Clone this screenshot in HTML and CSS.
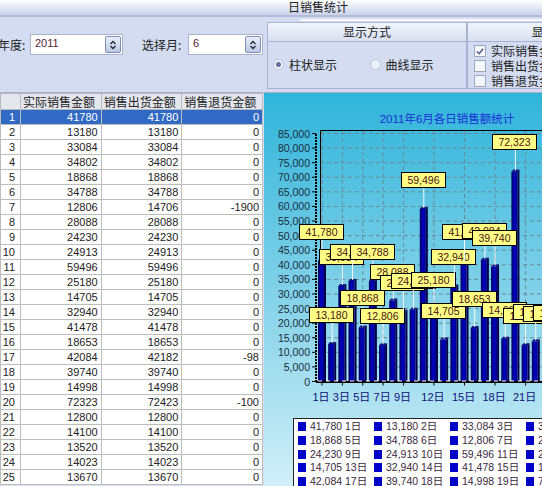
FILE: index.html
```html
<!DOCTYPE html>
<html lang="zh-CN">
<head>
    <meta charset="UTF-8">
    <title>日销售统计</title>
    <link rel="stylesheet" href="styles.css">
</head>
<body>

<div class="title-bar"><span class="title-text">日销售统计</span></div>

<div class="toolbar">
    <div class="field">
        <span class="field-label year-label">年度:</span>
        <div class="select year-select"><span>2011</span>
            <span class="spin"><svg width="8" height="10" viewBox="0 0 8 10"><path d="M1.5 4 4 1.5 6.5 4M1.5 6 4 8.5 6.5 6" fill="none" stroke="#223" stroke-width="1.3"/></svg></span>
        </div>
    </div>
    <div class="field month-field">
        <span class="field-label">选择月:</span>
        <div class="select month-select"><span>6</span>
            <span class="spin"><svg width="8" height="10" viewBox="0 0 8 10"><path d="M1.5 4 4 1.5 6.5 4M1.5 6 4 8.5 6.5 6" fill="none" stroke="#223" stroke-width="1.3"/></svg></span>
        </div>
    </div>
    <div class="group mode-group">
        <div class="group-head">显示方式</div>
        <div class="group-body radios">
            <label class="radio-item"><span class="radio checked"></span>柱状显示</label>
            <label class="radio-item"><span class="radio"></span>曲线显示</label>
        </div>
    </div>
    <div class="group show-group">
        <div class="group-head">显示内容</div>
        <div class="group-body checks">
            <label class="check-item"><span class="check"><svg width="11" height="11" viewBox="0 0 11 11"><path d="M2 5.5 4.5 8 9 2.5" fill="none" stroke="#55558a" stroke-width="1.6"/></svg></span>实际销售金额</label>
            <label class="check-item"><span class="check"></span>销售出货金额</label>
            <label class="check-item"><span class="check"></span>销售退货金额</label>
        </div>
    </div>
</div>

<div class="main">
    <table class="grid">
        <thead>
            <tr><th class="num-col"></th><th>实际销售金额</th><th>销售出货金额</th><th>销售退货金额</th></tr>
        </thead>
        <tbody id="gridBody"></tbody>
    </table>
    <div class="chart">
        <svg id="chartSvg" class="chart-svg" width="278" height="393" viewBox="264 93 278 393"></svg>
        <div class="legend" id="legend"></div>
    </div>
</div>

<script src="script.js"></script>
</body>
</html>
```

FILE: styles.css
```css
html, body {
    margin: 0;
    padding: 0;
}
body {
    width: 542px;
    height: 486px;
    overflow: hidden;
    background: #d6dff1;
    font-family: "Noto Sans CJK SC", "Liberation Sans", sans-serif;
    font-size: 12px;
    color: #222;
}
.title-bar {
    height: 15px;
    background: linear-gradient(to bottom, #ffffff, #c9d2ea);
    border-bottom: 2px solid #b4bcd9;
    overflow: hidden;
}
.title-text {
    display: block;
    margin-left: 288px;
    line-height: 13px;
}
.toolbar {
    display: flex;
    height: 75px;
    border-bottom: 1px solid #a9b1c9;
    background: #d4dcf1 linear-gradient(#f6f8fd, #f6f8fd) no-repeat 300px 2px / 242px 2px;
    overflow: hidden;
}
.field {
    display: flex;
    align-items: center;
    height: 21px;
    margin-top: 17px;
}
.field-label {
    white-space: nowrap;
}
.year-label {
    margin-left: -2px;
    width: 32px;
}
.month-field {
    margin-left: 19px;
}
.month-field .field-label {
    width: 46px;
}
.select {
    display: flex;
    justify-content: space-between;
    align-items: center;
    box-sizing: border-box;
    height: 21px;
    padding: 0 1px 3px 4px;
    background: #fff;
    border: 1px solid #a9b3cf;
    font-family: "Liberation Sans", sans-serif;
    font-size: 11px;
    color: #5a1a3a;
}
.year-select {
    width: 93px;
}
.month-select {
    width: 75px;
}
.spin {
    display: flex;
    align-items: center;
    justify-content: center;
    box-sizing: border-box;
    width: 16px;
    height: 17px;
    margin-top: 3px;
    background: linear-gradient(to bottom, #e8eefa, #bcc9e4);
    border: 1px solid #7f8fb5;
    border-radius: 2px;
}
.group {
    box-sizing: border-box;
    height: 67px;
    margin-top: 5px;
    border: 1px solid #aab2cf;
    background: #d4dcf1;
}
.mode-group {
    width: 201px;
    margin-left: 4px;
    border-right-width: 2px;
}
.show-group {
    width: 176px;
    flex-shrink: 0;
    border-left: none;
}
.group-head {
    height: 18px;
    line-height: 17px;
    text-align: center;
    border-bottom: 1px solid #aab2cf;
    background: linear-gradient(to bottom, #f2f5fc, #d7dff2);
}
.group-body {
    height: 46px;
}
.radios {
    display: flex;
    align-items: center;
    padding: 0 0 2px 5px;
    box-sizing: border-box;
}
.radio-item {
    display: flex;
    align-items: center;
    width: 98px;
    white-space: nowrap;
}
.radio {
    box-sizing: border-box;
    width: 11px;
    height: 11px;
    margin-right: 5px;
    border: 1px solid #bcc4dc;
    border-radius: 50%;
    background: #eef1f9;
}
.radio.checked {
    background: radial-gradient(circle, #6a6a9c 0, #6a6a9c 2px, #eef1f9 3px);
}
.checks {
    padding: 1px 0 0 6px;
}
.check-item {
    display: flex;
    align-items: center;
    height: 15px;
    white-space: nowrap;
}
.check {
    display: flex;
    box-sizing: border-box;
    width: 12px;
    height: 12px;
    margin-right: 5px;
    flex-shrink: 0;
    background: #f6f7fb;
    border: 1px solid #9ea6c0;
}
.main {
    display: flex;
    height: 394px;
}
.grid {
    align-self: flex-start;
    width: 263px;
    flex-shrink: 0;
    border-collapse: collapse;
    table-layout: fixed;
    background: #fff;
    font-family: "Liberation Sans", sans-serif;
    font-size: 11px;
    color: #222;
}
.grid th {
    height: 15px;
    padding: 0 0 0 2px;
    background: #e4e7ee;
    border: 1px solid #b5b8c0;
    font-family: "Noto Sans CJK SC", sans-serif;
    font-size: 12px;
    font-weight: normal;
    line-height: 14px;
    text-align: left;
    white-space: nowrap;
    overflow: hidden;
}
.grid .num-col {
    width: 17px;
}
.grid tr {
    height: 15px;
}
.grid td {
    box-sizing: border-box;
    height: 15px;
    padding: 0 3px 0 0;
    border: 1px solid #bdbdbd;
    text-align: right;
    line-height: 12px;
    overflow: hidden;
}
.grid td.row-num {
    padding-right: 5px;
}
.grid tr.selected td {
    background: #316ac5;
    color: #fff;
}
.chart {
    position: relative;
    width: 278px;
    height: 394px;
    margin-left: 1px;
    flex-shrink: 0;
    background: linear-gradient(to bottom, #2fb4da, #d2eff8);
    overflow: hidden;
}
.chart-svg {
    display: block;
    font-family: "Liberation Sans", "Noto Sans CJK SC", sans-serif;
    font-size: 10.5px;
}
.chart-title {
    fill: #1a2fd6;
    font-size: 11.5px;
    text-anchor: middle;
}
.y-label {
    fill: #1c2c3c;
    text-anchor: end;
}
.x-label {
    fill: #10107a;
    font-size: 11px;
    text-anchor: middle;
}
.grid-line {
    stroke: #6a8a94;
    stroke-width: 1;
    stroke-dasharray: 4 3;
}
.frame {
    stroke: #000;
    stroke-width: 1;
}
.y-axis {
    stroke: #000;
    stroke-width: 2;
    stroke-dasharray: 2 1;
}
.x-axis {
    stroke: #000;
    stroke-width: 2;
}
.x-axis-dash {
    stroke: #fff;
    stroke-width: 1;
    stroke-dasharray: 4 4;
}
.bar-front {
    fill: url(#barFill);
}
.bar-side {
    fill: #00004a;
}
.bar-top {
    fill: #0a0a78;
}
.leader {
    stroke: #f4f8fa;
    stroke-width: 1;
}
.tag-box {
    fill: #ffff85;
    stroke: #000;
    stroke-width: 1;
}
.tag-text {
    fill: #4a1410;
    text-anchor: middle;
    font-size: 10.5px;
}
.legend {
    position: absolute;
    left: 29px;
    top: 325px;
    display: grid;
    grid-template-columns: repeat(4, 76px);
    grid-auto-rows: 13.7px;
    width: 320px;
    height: 90px;
    padding: 1px 0 0 4px;
    background: #fff;
    border: 1px solid #222;
    font-family: "Liberation Sans", "Noto Sans CJK SC", sans-serif;
    font-size: 10.5px;
    color: #3a2a40;
}
.legend-item {
    display: flex;
    align-items: center;
    white-space: nowrap;
    line-height: 13px;
}
.legend-mark {
    width: 8px;
    height: 9px;
    margin-right: 4px;
    flex-shrink: 0;
    background: #0000c8;
}
```

FILE: script.js
```js
const rows = [
    [41780, 41780, 0], [13180, 13180, 0], [33084, 33084, 0], [34802, 34802, 0], [18868, 18868, 0],
    [34788, 34788, 0], [12806, 14706, -1900], [28088, 28088, 0], [24230, 24230, 0], [24913, 24913, 0],
    [59496, 59496, 0], [25180, 25180, 0], [14705, 14705, 0], [32940, 32940, 0], [41478, 41478, 0],
    [18653, 18653, 0], [42084, 42182, -98], [39740, 39740, 0], [14998, 14998, 0], [72323, 72423, -100],
    [12800, 12800, 0], [14100, 14100, 0], [13520, 13520, 0], [14023, 14023, 0], [13670, 13670, 0]
];

// Table
let tableHtml = '';
rows.forEach((r, i) => {
    tableHtml += `<tr class="${i === 0 ? 'selected' : ''}"><td class="row-num">${i + 1}</td><td>${r[0]}</td><td>${r[1]}</td><td>${r[2]}</td></tr>`;
});
document.getElementById('gridBody').innerHTML = tableHtml;

// Chart geometry, in page pixels
const zeroY = 381.5;
const perUnit = 248 / 85000;
const barX = day => 322 + (day - 1) * 10.18;
const money = n => n.toLocaleString('en-US');

let svg = `<defs><linearGradient id="barFill" x1="0" x2="1" y1="0" y2="0">
    <stop offset="0" stop-color="#000058"/><stop offset="0.5" stop-color="#0000c4"/><stop offset="1" stop-color="#00008c"/>
</linearGradient></defs>`;

svg += '<text class="chart-title" x="447" y="123">2011年6月各日销售额统计</text>';

// Horizontal grid and value labels
for (let v = 0; v <= 85000; v += 5000) {
    const y = zeroY - v * perUnit;
    if (v > 0) svg += `<line class="grid-line" x1="320" x2="542" y1="${y}" y2="${y}"/>`;
    svg += `<line class="frame" x1="312" x2="316" y1="${y}" y2="${y}"/>`;
    svg += `<text class="y-label" x="310" y="${y + 4}">${money(v)}</text>`;
}

// Vertical grid and day labels
[1, 3, 5, 7, 9, 12, 15, 18, 21].forEach(day => {
    const x = barX(day);
    svg += `<line class="grid-line" x1="${x}" x2="${x}" y1="131" y2="${zeroY}"/>`;
    svg += `<line class="frame" x1="${x}" x2="${x}" y1="${zeroY}" y2="${zeroY + 4}"/>`;
    svg += `<text class="x-label" x="${x - 1}" y="401">${day}日</text>`;
});

svg += '<line class="frame" x1="320" x2="542" y1="130.5" y2="130.5"/>';
svg += '<line class="frame" x1="320.5" x2="320.5" y1="130" y2="382"/>';
svg += '<line class="y-axis" x1="316" x2="316" y1="134" y2="383"/>';

// Bars
rows.forEach((r, i) => {
    const c = barX(i + 1);
    const top = zeroY - r[0] * perUnit;
    svg += `<rect class="bar-front" x="${c - 4}" y="${top + 1}" width="6" height="${zeroY - top - 1}"/>`;
    svg += `<polygon class="bar-side" points="${c + 2},${top + 1} ${c + 4},${top - 1} ${c + 4},${zeroY} ${c + 2},${zeroY}"/>`;
    svg += `<polygon class="bar-top" points="${c - 4},${top + 1} ${c - 2},${top - 1} ${c + 4},${top - 1} ${c + 2},${top + 1}"/>`;
});
svg += '<line class="x-axis" x1="316" x2="542" y1="382" y2="382"/>';
svg += '<line class="x-axis-dash" x1="318" x2="542" y1="381" y2="381"/>';

// Value tags, later days drawn over earlier ones
rows.forEach((r, i) => {
    const c = barX(i + 1);
    const top = zeroY - r[0] * perUnit;
    const tagY = Math.round(top - 36) + 0.5;
    const tagX = Math.round(c - 23) + 0.5;
    svg += `<line class="leader" x1="${c}" x2="${c}" y1="${tagY + 15}" y2="${top}"/>`;
    svg += `<rect class="tag-box" x="${tagX}" y="${tagY}" width="44" height="15"/>`;
    svg += `<text class="tag-text" x="${tagX + 22}" y="${tagY + 11.5}">${money(r[0])}</text>`;
});
document.getElementById('chartSvg').innerHTML = svg;

// Legend
let legendHtml = '';
rows.forEach((r, i) => {
    legendHtml += `<div class="legend-item"><span class="legend-mark"></span>${money(r[0])} ${i + 1}日</div>`;
});
document.getElementById('legend').innerHTML = legendHtml;
```
